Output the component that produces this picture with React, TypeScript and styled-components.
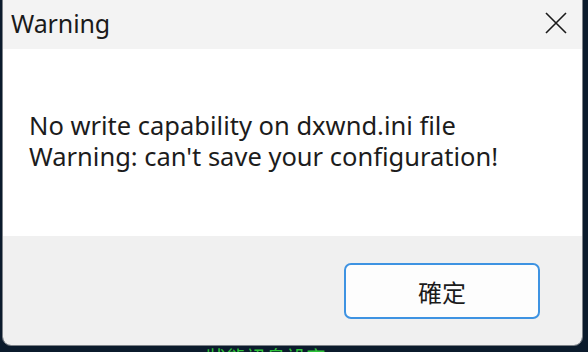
import styled, { createGlobalStyle } from "styled-components"

const GlobalStyle = createGlobalStyle`
  html, body {
    margin: 0;
    padding: 0;
    background: #0b1b2c;
    overflow: hidden;
  }
  body {
    width: 588px;
    height: 352px;
    font-family: "Noto Sans", "Noto Sans CJK TC", sans-serif;
  }
`

const Desktop = styled.div`
  width: 588px;
  height: 352px;
  display: flex;
  flex-direction: column;
  overflow: hidden;
`

const Window = styled.div`
  margin: -10px 0 0 2px;
  width: 581px;
  height: 356px;
  border: 1px solid #7d8288;
  border-radius: 9px;
  overflow: hidden;
  display: flex;
  flex-direction: column;
  box-sizing: border-box;
  flex-shrink: 0;
`

const TitleBar = styled.div`
  height: 58px;
  padding: 10px 14px 4px 8px;
  box-sizing: border-box;
  background: #f3f3f3;
  display: flex;
  align-items: center;
  justify-content: space-between;
`

const Title = styled.div`
  font-size: 25px;
  color: #1a1a1a;
  letter-spacing: -0.1px;
`

const CloseButton = styled.div`
  width: 24px;
  height: 24px;
  display: flex;
  align-items: center;
  justify-content: center;
`

const Body = styled.div`
  background: #ffffff;
  height: 187px;
  padding: 61px 0 0 26px;
  box-sizing: border-box;
`

const Message = styled.p`
  margin: 0;
  font-size: 25.5px;
  line-height: 31px;
  color: #1c1c1c;
`

const Footer = styled.div`
  flex: 1;
  background: #f0f0f0;
  display: flex;
  justify-content: flex-end;
  align-items: flex-start;
  padding: 27px 42px 0 0;
`

const Button = styled.button`
  width: 196px;
  height: 56px;
  border: 2px solid #3e93e2;
  border-radius: 7px;
  background: #fdfdfd;
  font-family: "Noto Sans CJK TC", sans-serif;
  font-size: 24px;
  color: #1b1b1b;
  padding: 0;
`

const DesktopText = styled.div`
  margin: 2px 0 0 206px;
  color: #2fc23a;
  font-family: "Noto Sans CJK TC", sans-serif;
  font-size: 20px;
  line-height: 20px;
  white-space: nowrap;
`

export default function App() {
  return (
    <>
      <GlobalStyle />
      <Desktop>
        <Window>
          <TitleBar>
            <Title>Warning</Title>
            <CloseButton>
              <svg width="22" height="22" viewBox="0 0 22 22">
                <path d="M1 1 L21 21 M21 1 L1 21" stroke="#1a1a1a" strokeWidth="1.6" />
              </svg>
            </CloseButton>
          </TitleBar>
          <Body>
            <Message>No write capability on dxwnd.ini file</Message>
            <Message>Warning: can't save your configuration!</Message>
          </Body>
          <Footer>
            <Button>確定</Button>
          </Footer>
        </Window>
        <DesktopText>狀態訊息設定</DesktopText>
      </Desktop>
    </>
  )
}
